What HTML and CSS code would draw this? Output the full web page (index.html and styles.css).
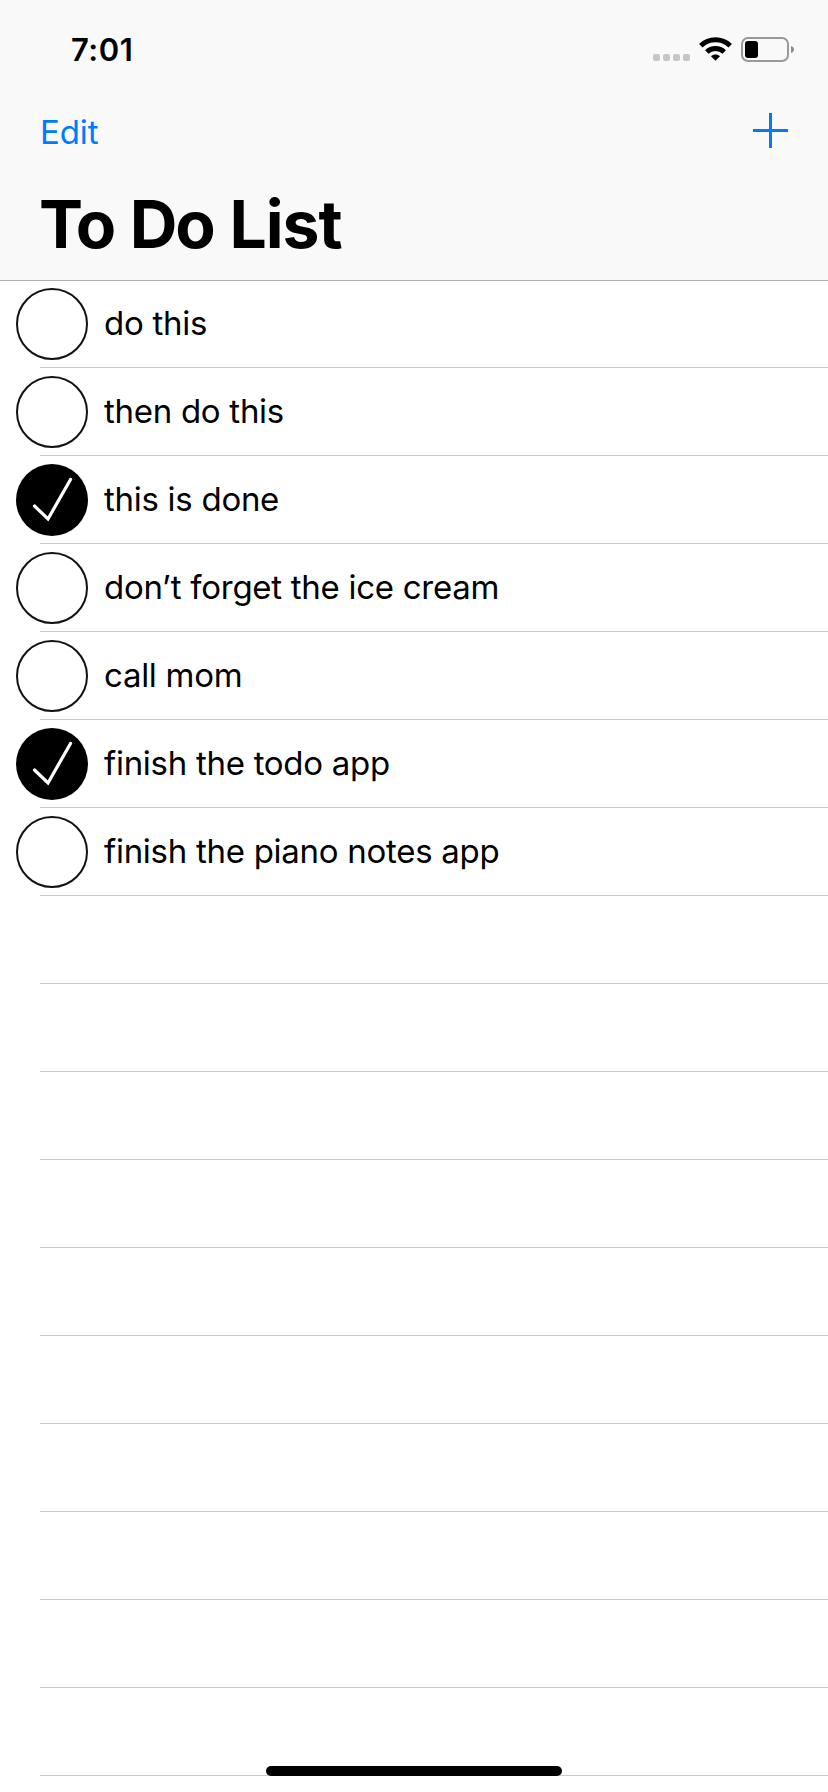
FILE: index.html
```html
<!DOCTYPE html>
<html lang="en">
<head>
<meta charset="utf-8">
<title>To Do List</title>
<link rel="stylesheet" href="styles.css">
</head>
<body>
<div class="screen">
  <header class="header">
    <div class="status">
      <span class="time">7:01</span>
      <div class="indicators">
        <span class="signal"><i class="dot"></i><i class="dot"></i><i class="dot"></i><i class="dot"></i></span>
        <svg class="wifi" width="33" height="24" viewBox="0 0 33 24">
          <path fill="none" stroke="#000" stroke-width="5" d="M1.8 8.700C10 .8 23 .8 31.200 8.700M7.800 15C12.600 10.400 20.400 10.400 25.200 15"/>
          <path d="M16.500 23.800L12 19.300C14.400 16.800 18.600 16.800 21 19.300Z"/>
        </svg>
        <svg class="battery" width="53" height="25" viewBox="0 0 53 25">
          <rect x="1" y="1" width="46" height="23" rx="6" fill="none" stroke="#999" stroke-width="2"/>
          <rect x="4" y="4" width="13" height="17" rx="3"/>
          <path fill="#8e8e8e" d="M50 9C52 9.600 53 11 53 12.500S52 15.400 50 16Z"/>
        </svg>
      </div>
    </div>
    <nav class="nav">
      <span class="edit">Edit</span>
      <svg width="35" height="35" viewBox="0 0 35 35"><path fill="#007aff" d="M16 0h3v16h16v3H19v16h-3V19H0v-3h16z"/></svg>
    </nav>
    <h1 class="title">To Do <span class="title-end">List</span></h1>
  </header>
  <ul class="list">
    <li class="row"><span class="circle"></span><span class="label">do this</span></li>
    <li class="row"><span class="circle"></span><span class="label">then do this</span></li>
    <li class="row"><span class="circle done"><svg width="72" height="72" viewBox="0 0 72 72"><path class="tick" d="M18.500 42L32 55L54.500 15.500"/></svg></span><span class="label">this is done</span></li>
    <li class="row"><span class="circle"></span><span class="label">don’t forget the ice cream</span></li>
    <li class="row"><span class="circle"></span><span class="label">call mom</span></li>
    <li class="row"><span class="circle done"><svg width="72" height="72" viewBox="0 0 72 72"><path class="tick" d="M18.500 42L32 55L54.500 15.500"/></svg></span><span class="label">finish the todo app</span></li>
    <li class="row"><span class="circle"></span><span class="label">finish the piano notes app</span></li>
    <li class="row"></li><li class="row"></li><li class="row"></li><li class="row"></li><li class="row"></li>
    <li class="row"></li><li class="row"></li><li class="row"></li><li class="row"></li><li class="row"></li>
  </ul>
  <div class="home"></div>
</div>
</body>
</html>
```
FILE: styles.css
```css
* { box-sizing: border-box; }
body { margin: 0; background: #fff; color: #000; font-family: Inter, "Liberation Sans", sans-serif; }
.screen { position: relative; width: 828px; height: 1792px; overflow: hidden; }
.header { position: relative; z-index: 1; height: 280px; background: #f9f9f9; box-shadow: 0 1px 0 #b2b2b2; }
.status { display: flex; justify-content: space-between; height: 88px; padding: 0 34px 0 71px; }
.time { padding-top: 30px; font-size: 31px; line-height: 40px; font-weight: 600; letter-spacing: 0.5px; }
.indicators { display: flex; align-items: flex-start; padding-top: 37px; }
.signal { display: flex; gap: 3px; padding-top: 17px; margin-right: 9px; }
.dot { width: 7px; height: 7px; border-radius: 2px; background: #c7c7c7; }
.battery { margin-left: 9px; }
.nav { display: flex; justify-content: space-between; align-items: flex-start; height: 88px; padding: 25px 40px 0; }
.edit { margin-top: -1px; font-size: 33px; line-height: 40px; letter-spacing: -0.1px; color: #007aff; }
.title { margin: 0; padding: 8px 39px 0; font-size: 66px; line-height: 80px; font-weight: 700; letter-spacing: -2.2px; word-spacing: 2.4px; }
.title-end { letter-spacing: -1px; }
.list { margin: 0; padding: 0; list-style: none; }
.row { display: flex; align-items: center; height: 88px; padding-left: 16px; background: linear-gradient(#c8c7cc, #c8c7cc) 40px 87px / 788px 1px no-repeat; }
.circle { width: 72px; height: 72px; border: 2px solid #111; border-radius: 50%; background: #fff; }
.circle.done { border: 0; background: #000; }
.circle svg { display: block; }
.tick { fill: none; stroke: #fff; stroke-width: 3.2; stroke-linecap: round; stroke-linejoin: miter; }
.label { margin-left: 16px; padding-bottom: 2px; font-size: 33px; line-height: 40px; letter-spacing: -0.28px; white-space: nowrap; }
.home { position: absolute; z-index: 2; left: 266px; top: 1766px; width: 296px; height: 10px; border-radius: 5px; background: #000; }
```
